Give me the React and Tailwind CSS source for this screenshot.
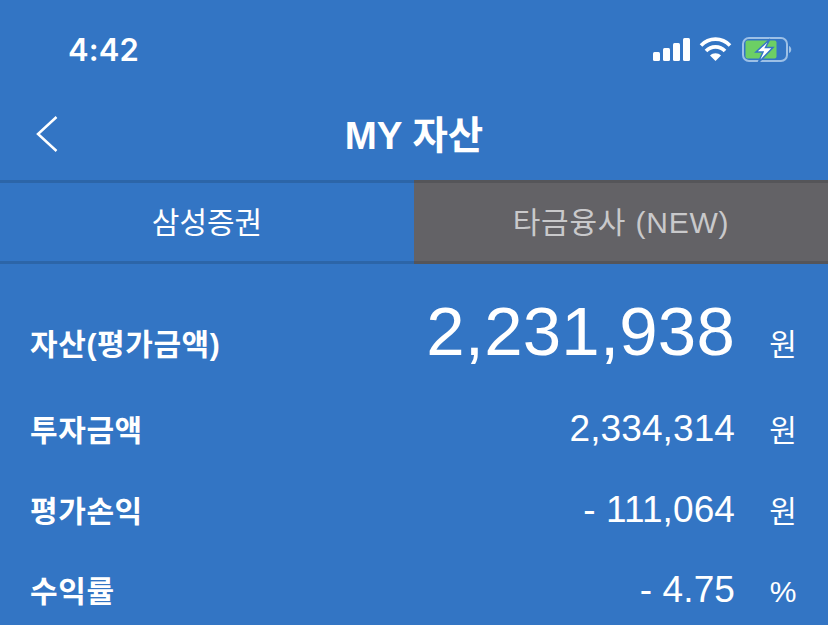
const FONT = "font-['Liberation_Sans','Noto_Sans_CJK_KR',sans-serif]";

function Row({ label, value, unit, big, cls }) {
  return (
    <div className={`flex items-baseline justify-between pl-[30px] pr-[31px] ${cls}`}>
      <span className="text-[30px] font-bold tracking-[0.6px] text-white leading-none">{label}</span>
      <div className="flex items-baseline">
        <span className={`text-white leading-none ${big ? "text-[69px] tracking-[0.2px]" : "text-[37px] tracking-[0.1px]"}`}>{value}</span>
        <span className="ml-[34px] w-[28px] text-center text-[30px] text-white leading-none">{unit}</span>
      </div>
    </div>
  );
}

export default function App() {
  return (
    <div className={`h-[625px] w-[828px] overflow-hidden bg-[#3375c4] ${FONT}`}>
      <div className="flex h-[100px] items-start justify-between pl-[68px] pr-[33px] pt-[31px]">
        <span className="font-['Inter',sans-serif] text-[31px] font-semibold leading-[38px] tracking-[0.1px] text-white">4:42</span>
        <svg width="142" height="30" viewBox="0 0 142 30" className="mt-[6px]">
          <rect x="0" y="15" width="7" height="9" rx="1.5" fill="#fff" />
          <rect x="10" y="11" width="7" height="13" rx="1.5" fill="#fff" />
          <rect x="20" y="6" width="7" height="18" rx="1.5" fill="#fff" />
          <rect x="30" y="1" width="7" height="23" rx="1.5" fill="#fff" />
          <path d="M48 8.500 C56 0 69 0 77 8.500" fill="none" stroke="#fff" strokeWidth="3.600" />
          <path d="M53 14 C58 8.500 67 8.500 72 14" fill="none" stroke="#fff" strokeWidth="3.600" />
          <path d="M57 18.500 C60 15.500 65 15.500 68 18.500 L62.500 24 Z" fill="#fff" />
          <rect x="90" y="1" width="44" height="23" rx="6" fill="none" stroke="#9dc0e6" strokeWidth="2" />
          <rect x="92.500" y="3.500" width="31" height="18" rx="2" fill="#6ccf64" />
          <path d="M136 9 C139 10 139 15 136 16 Z" fill="#9dc0e6" />
          <path d="M117 2 L103 15 L110 15 L105 26 L120 10.500 L112.500 10.500 Z" fill="#fff" stroke="#3375c4" strokeWidth="1.500" />
        </svg>
      </div>
      <div className="relative flex h-[80px] items-center justify-center">
        <svg width="24" height="38" viewBox="0 0 24 38" className="absolute left-[35px] top-[15px]">
          <path d="M21.500 2 L3 19 L21.500 36" fill="none" stroke="#fff" strokeWidth="2.500" />
        </svg>
        <span className="-mt-[8px] text-[38.500px] font-bold leading-none text-white">MY 자산</span>
      </div>
      <div className="flex h-[84px] border-y-[3px] border-[#2c65a8]">
        <div className="flex w-[414px] items-center justify-center pt-[2px] text-[30px] leading-none text-white">삼성증권</div>
        <div className="-my-[3px] flex flex-1 items-center justify-center border-y-[3px] border-[#555559] bg-[#636266] pt-[2px] text-[30px] tracking-[0.800px] leading-none text-[#c9c9cb]">타금융사 (NEW)</div>
      </div>
      <Row label="자산(평가금액)" value="2,231,938" unit="원" big cls="mt-[33px]" />
      <Row label="투자금액" value="2,334,314" unit="원" cls="mt-[44px]" />
      <Row label="평가손익" value="- 111,064" unit="원" cls="mt-[44px]" />
      <Row label="수익률" value="- 4.75" unit="%" cls="mt-[43px]" />
    </div>
  );
}
